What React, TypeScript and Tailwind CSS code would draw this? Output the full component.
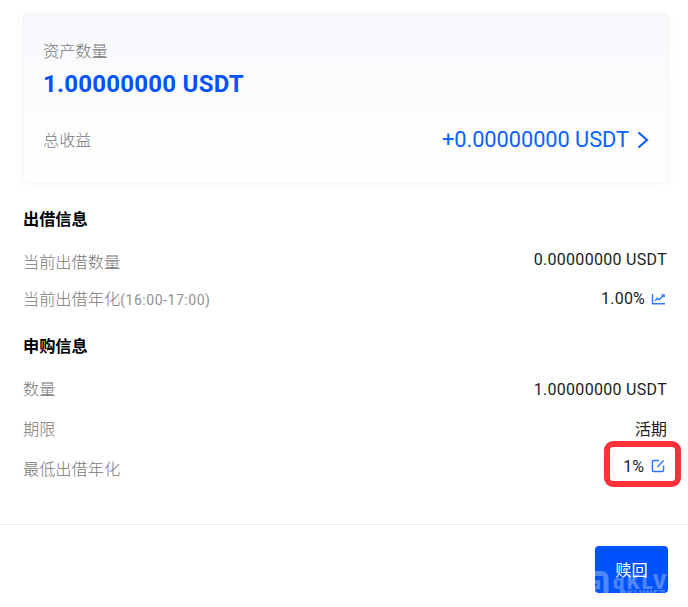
import type { ReactNode } from "react";

function Row({ label, className, children }: { label: ReactNode; className: string; children: ReactNode }) {
  return (
    <div className={`flex items-center justify-between ${className}`}>
      <span className="-ml-px pt-[2px] text-[16.2px] font-light text-[#777777]">{label}</span>
      {children}
    </div>
  );
}

function ChartIcon() {
  return (
    <svg className="-mt-px h-[14px] w-[15px]" viewBox="0 0 15 14" fill="none" stroke="#3478ff" strokeWidth="1.4">
      <path d="M1.5 2v9.8H14" />
      <path d="M4 9 6.3 6.3l1.6 1.5 4.9-4.5" />
      <path d="M10.4 3h2.7v2.6" />
    </svg>
  );
}

function EditIcon() {
  return (
    <svg className="-mt-px h-[14px] w-[14px]" viewBox="0 0 14 14" fill="none" stroke="#2876ff" strokeWidth="1.4">
      <path d="M8 1.5H2.6a1.2 1.2 0 0 0-1.2 1.2v8.6a1.2 1.2 0 0 0 1.2 1.2h8.8a1.2 1.2 0 0 0 1.2-1.2V6.5" />
      <path d="M6.3 8 12.5 1.4" />
    </svg>
  );
}

// Faint logo lettering that is clipped by the button's edges
function Watermark() {
  return (
    <div className="pointer-events-none absolute inset-0 overflow-hidden rounded-[4px] text-white opacity-30">
      <svg className="absolute bottom-0 left-0 h-[22px] w-[14px]" viewBox="0 0 14 22" fill="none" stroke="currentColor" strokeWidth="5">
        <path d="M0 2.5h7a4 4 0 0 1 4 4V22" />
        <path d="M0 11h3.5v5.5H0" strokeWidth="3.5" />
      </svg>
      <span className="absolute top-[26px] left-[18px] text-[20px] leading-[20px] font-black tracking-[2.4px]">qKLV</span>
      <span className="absolute top-[44px] left-[25px] text-[9px] leading-[9px] font-black tracking-[1px]">QKLVNET</span>
    </div>
  );
}

export default function App() {
  return (
    <main className="h-[607px] w-[688px] overflow-hidden bg-white font-[Roboto,'Noto_Sans_CJK_SC',sans-serif] leading-none text-[#202124]">
      <section className="mt-[13px] ml-[23px] flex h-[170px] w-[645px] flex-col rounded-[4px] border border-[#f3f4f6] bg-linear-to-b from-[#f7f8fc] via-[#fcfcfe] to-white px-[19px] shadow-[0_2px_14px_rgba(0,0,0,0.035)]">
        <span className="mt-[26px] text-[16.2px] leading-[24px] font-light text-[#777777]">资产数量</span>
        <strong className="mt-[5px] text-[24px] leading-[30px] font-bold tracking-[0.25px] text-[#0052ff]">1.00000000 USDT</strong>
        <div className="mt-[25px] flex h-[32px] items-center justify-between">
          <span className="pt-[3px] text-[16.2px] font-light text-[#777777]">总收益</span>
          <span className="-mr-px flex items-center gap-[8px] text-[21.8px] tracking-[-0.05px] text-[#0b62ff]">
            +0.00000000 USDT
            <svg className="h-[18px] w-[12px]" viewBox="0 0 12 18" fill="none" stroke="currentColor" strokeWidth="2.2">
              <path d="m1.5 1.5 8.5 7.5-8.5 7.5" />
            </svg>
          </span>
        </div>
      </section>

      <section className="mr-[21px] ml-[24px] text-[16px]">
        <h2 className="-ml-px mt-[24px] flex h-[24px] items-center pt-[2px] text-[16.2px] font-bold text-black">出借信息</h2>
        <Row label="当前出借数量" className="mt-[12px] h-[38px]">
          <span className="-mt-[5px] tracking-[0.3px]">0.00000000 USDT</span>
        </Row>
        <Row label={<>当前出借年化<span className="text-[14px] font-normal tracking-[0.55px] text-[#929292]">(16:00-17:00)</span></>} className="h-[37px]">
          <span className="-mt-px flex items-center gap-[6px] pr-[1px] tracking-[0.2px]">1.00%<ChartIcon /></span>
        </Row>
        <h2 className="-ml-px mt-[16px] flex h-[24px] items-center pt-[2px] text-[16.2px] font-bold text-black">申购信息</h2>
        <Row label="数量" className="mt-[12px] h-[39px]">
          <span className="tracking-[0.3px]">1.00000000 USDT</span>
        </Row>
        <Row label="期限" className="h-[40px]">
          <span className="pt-[2px] text-[16.2px]">活期</span>
        </Row>
        <Row label="最低出借年化" className="relative h-[40px]">
          <span className="-mt-[5px] flex items-center gap-[7px] pr-[2px]">1%<EditIcon /></span>
          <span className="absolute -top-[8px] -right-[14px] h-[46px] w-[77px] rounded-[9px] border-[6px] border-[#ff323b]" />
        </Row>
      </section>

      <footer className="mt-[35px] flex justify-end border-t border-[#ededed] pt-[21px] pr-[20px]">
        <button className="relative h-[47px] w-[73px] rounded-[4px] bg-[#0052ff] pt-[3px] text-[16.2px] text-white">
          赎回
          <Watermark />
        </button>
      </footer>
    </main>
  );
}
